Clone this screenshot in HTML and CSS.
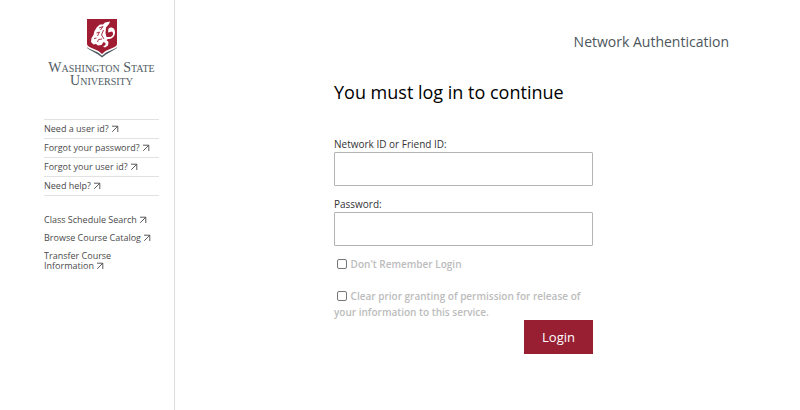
FILE: index.html
```html
<!DOCTYPE html>
<html lang="en">
<head>
  <meta charset="UTF-8">
  <meta name="viewport" content="width=device-width, initial-scale=1.0">
  <title>Network Authentication | Washington State University</title>
  <link rel="stylesheet" href="styles.css">
</head>
<body>
  <svg width="0" height="0" class="sprite" aria-hidden="true">
    <symbol id="arrow" viewBox="0 0 8 8">
      <path d="M1 1.2H6.8V7M6.8 1.2L1.2 6.8" fill="none" stroke="currentColor" stroke-width="0.9"/>
    </symbol>
  </svg>

  <div class="page">
    <aside class="sidebar">
      <a href="#" class="logo">
        <svg class="shield" viewBox="0 0 32 40" aria-hidden="true">
          <path d="M1 27.500L1.500 30.500L12 36.500L16 39.500L20 36.500L30.500 30.500L31 27.500Z" fill="#4f5b63"/>
          <path d="M0.500 0.500H31.500V26.500C31.500 29 30.500 29.800 28 31L20 34.500L16 37.800L12 34.500L4 31C1.500 29.800 0.500 29 0.500 26.500Z" fill="#fff"/>
          <path d="M1 1H31V25.500C31 27.500 30 28.200 28 29.200L19.500 33L16 36L12.500 33L4 29.200C2 28.200 1 27.500 1 25.500Z" fill="#a01c33"/>
          <path d="M11 9L14 6.500L17 6.500L19 4.500L24 3.500L23 6L20 9.500L19.500 15L20.500 19L24 19C27 18.500 28 15 26 13.500L22 14.500L22.500 10.500C25.500 8 29.500 10.500 29 15C28.500 19 25.500 21 22 21L20.500 22L22.500 24L22 27.500L19 29.500L17 28.500L19.500 27L19.500 25L17.500 24L15.500 27L12 27.500L10 26L7.500 26.500L5 24L5.500 20L7.500 17L8.500 13Z" fill="#fff"/>
          <path d="M13 10L17 8.500L14.500 12M10.500 15L13.500 14L11.500 18M17.500 12L15.500 17L18 21M8 20.500L10.500 20M11.500 24L12.500 21.500L16 21" fill="none" stroke="#a01c33" stroke-width="0.9"/>
        </svg>
        <span class="wordmark">
          <span><b>W</b>ASHINGTON<b> S</b>TATE</span>
          <span><b>U</b>NIVERSITY</span>
        </span>
      </a>

      <ul class="help-links">
        <li><a href="#">Need a user id? <svg class="arrow" aria-hidden="true"><use href="#arrow"/></svg></a></li>
        <li><a href="#">Forgot your password? <svg class="arrow" aria-hidden="true"><use href="#arrow"/></svg></a></li>
        <li><a href="#">Forgot your user id? <svg class="arrow" aria-hidden="true"><use href="#arrow"/></svg></a></li>
        <li><a href="#">Need help? <svg class="arrow" aria-hidden="true"><use href="#arrow"/></svg></a></li>
      </ul>

      <ul class="course-links">
        <li><a href="#">Class Schedule Search <svg class="arrow" aria-hidden="true"><use href="#arrow"/></svg></a></li>
        <li><a href="#">Browse Course Catalog <svg class="arrow" aria-hidden="true"><use href="#arrow"/></svg></a></li>
        <li><a href="#">Transfer Course<br>Information <svg class="arrow" aria-hidden="true"><use href="#arrow"/></svg></a></li>
      </ul>
    </aside>

    <main class="content">
      <header class="site-title">Network Authentication</header>

      <form class="login">
        <h1>You must log in to continue</h1>

        <label class="field-label" for="username">Network ID or Friend ID:</label>
        <input class="field" type="text" id="username" name="username">

        <label class="field-label" for="password">Password:</label>
        <input class="field" type="password" id="password" name="password">

        <div class="option">
          <input type="checkbox" id="no-remember" name="no-remember">
          <label for="no-remember">Don't Remember Login</label>
        </div>
        <div class="option">
          <input type="checkbox" id="clear-consent" name="clear-consent">
          <label for="clear-consent">Clear prior granting of permission for release of your information to this service.</label>
        </div>

        <button class="submit" type="submit">Login</button>
      </form>
    </main>
  </div>
</body>
</html>
```

FILE: styles.css
```css
* {
  box-sizing: border-box;
}
body {
  margin: 0;
  background: #fff;
  color: #000;
  font-family: 'Open Sans', 'Noto Sans', sans-serif;
}
ul {
  list-style: none;
  margin: 0;
  padding: 0;
}
.sprite {
  display: none;
}
.page {
  display: flex;
  min-height: 100vh;
}

/* sidebar */
.sidebar {
  flex: none;
  width: 175px;
  padding: 18px 15px 16px 44px;
  border-right: 1px solid #dcdcdc;
}
.logo {
  display: flex;
  flex-direction: column;
  align-items: center;
  gap: 4px;
  color: #4f5b63;
  text-decoration: none;
}
.shield {
  width: 32px;
  height: 40px;
}
.wordmark {
  font-family: 'Liberation Serif', serif;
  font-size: 10px;
  line-height: 12px;
  text-align: center;
  white-space: nowrap;
}
.wordmark span {
  display: block;
}
.wordmark b {
  font-size: 14px;
  font-weight: normal;
}
.help-links,
.course-links {
  font-size: 9px;
  line-height: 10px;
}
.help-links {
  margin-top: 31px;
  border-top: 1px solid #e2e2e2;
}
.help-links li {
  padding: 4px 0;
  border-bottom: 1px solid #e2e2e2;
}
.course-links {
  display: flex;
  flex-direction: column;
  gap: 8px;
  margin-top: 19px;
}
.sidebar li a {
  color: #4a4a4a;
  text-decoration: none;
}
.sidebar li a:hover {
  text-decoration: underline;
}
.arrow {
  width: 8px;
  height: 8px;
  vertical-align: -1px;
}

/* main column */
.content {
  flex: 1;
  padding: 32px 71px 32px 159px;
}
.site-title {
  color: #4c565c;
  font-size: 14px;
  line-height: 20px;
  text-align: right;
}
.login {
  display: flex;
  flex-direction: column;
  max-width: 259px;
  margin-top: 28px;
}
.login h1 {
  margin: 0 0 32px;
  font-size: 18px;
  font-weight: normal;
  line-height: 24px;
  white-space: nowrap;
}
.field-label {
  color: #333;
  font-size: 10px;
  line-height: 16px;
}
.field {
  width: 100%;
  height: 34px;
  margin: 0 0 10px;
  padding: 4px 8px;
  border: 1px solid #b4b4b4;
  border-radius: 1px;
  font: inherit;
  font-size: 14px;
}
.option {
  margin-bottom: 16px;
  color: #bcbcbc;
  font-size: 10px;
  font-weight: 600;
  line-height: 16px;
}
.option input {
  appearance: none;
  width: 10px;
  height: 10px;
  margin: 0 1px 0 3px;
  border: 1px solid #767676;
  border-radius: 2px;
  background: #fff;
  vertical-align: -1px;
}
.option:last-of-type {
  margin-bottom: 0;
}
.option input:checked {
  background: #981e32;
}
.submit {
  align-self: flex-end;
  padding: 7px 18px;
  border: 0;
  background: #981e32;
  color: #fff;
  font-family: inherit;
  font-size: 13px;
  line-height: 20px;
  cursor: pointer;
}
```
